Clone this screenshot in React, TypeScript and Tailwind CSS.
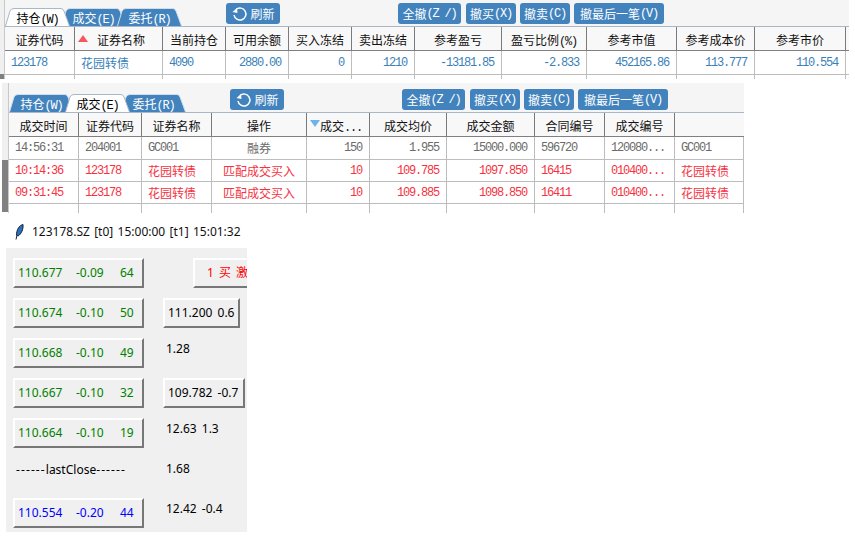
import React from 'react';

const CJK = '"Noto Sans CJK SC", sans-serif';
const MONO = '"Liberation Mono", "Noto Sans CJK SC", monospace';
const TK = '"Noto Sans", "Noto Sans CJK SC", sans-serif';

type Col = { w: number; label: string };

const holdCols: Col[] = [
  { w: 70, label: '证券代码' },
  { w: 88, label: '证券名称' },
  { w: 63, label: '当前持仓' },
  { w: 63, label: '可用余额' },
  { w: 63, label: '买入冻结' },
  { w: 63, label: '卖出冻结' },
  { w: 87, label: '参考盈亏' },
  { w: 85, label: '盈亏比例(%)' },
  { w: 90, label: '参考市值' },
  { w: 78, label: '参考成本价' },
  { w: 91, label: '参考市价' },
];

const holdRow = ['123178', '花园转债', '4090', '2880.00', '0', '1210', '-13181.85', '-2.833', '452165.86', '113.777', '110.554'];
const holdAlign = ['l', 'l', 'l', 'r', 'r', 'r', 'r', 'r', 'r', 'r', 'r'];

const dealCols: Col[] = [
  { w: 70, label: '成交时间' },
  { w: 63, label: '证券代码' },
  { w: 70, label: '证券名称' },
  { w: 95, label: '操作' },
  { w: 63, label: '成交...' },
  { w: 77, label: '成交均价' },
  { w: 88, label: '成交金额' },
  { w: 70, label: '合同编号' },
  { w: 70, label: '成交编号' },
  { w: 69, label: '' },
];

const dealAlign = ['l', 'l', 'l', 'c', 'r', 'r', 'r', 'l', 'l', 'l'];
const dealRows = [
  { color: 'text-[#6b6b6b]', h: 'h-[23px]', cells: ['14:56:31', '204001', 'GC001', '融券', '150', '1.955', '15000.000', '596720', '120080...', 'GC001'] },
  { color: 'text-[#f5333f]', h: 'h-[22px]', cells: ['10:14:36', '123178', '花园转债', '匹配成交买入', '10', '109.785', '1097.850', '16415', '010400...', '花园转债'] },
  { color: 'text-[#f5333f]', h: 'h-[22px]', cells: ['09:31:45', '123178', '花园转债', '匹配成交买入', '10', '109.885', '1098.850', '16411', '010400...', '花园转债'] },
];

// latin runs are narrower than the CJK ones in the original bitmap font
function Mixed({ text }: { text: string }) {
  const parts = text.split(/([\x00-\x7f]+)/).filter(Boolean);
  return (
    <>
      {parts.map((p, i) =>
        /^[\x00-\x7f]+$/.test(p) ? (
          <span key={i} className="whitespace-pre text-[12px] tracking-[-1.2px]" style={{ fontFamily: MONO }}>
            {p}
          </span>
        ) : (
          <span key={i} className="text-[12px]" style={{ fontFamily: CJK }}>
            {p}
          </span>
        ),
      )}
    </>
  );
}

function Tabs({ active }: { active: number }) {
  const labels = ['持仓(W)', '成交(E)', '委托(R)'];
  return (
    <div className="flex h-[18px] items-end">
      {labels.map((label, i) => (
        <div
          key={label}
          className={
            'relative flex h-[18px] w-[65px] shrink-0 items-center justify-center leading-none ' +
            (i > 0 ? '-ml-[9px] ' : '') +
            (i === active ? 'z-10 text-black' : 'text-white')
          }
        >
          <svg width="65" height="18" viewBox="0 0 65 18" className="absolute left-0 top-0">
            <path
              d="M0.500 18L5 3Q6 0.500 9 0.500H56Q58 0.500 59 3L64.500 18"
              fill={i === active ? '#ffffff' : '#4283bd'}
              stroke={i === active ? '#a9b7c6' : '#cfdeeb'}
              strokeWidth="1"
            />
          </svg>
          <span className="relative">
            <Mixed text={label} />
          </span>
        </div>
      ))}
    </div>
  );
}

function Btn({ w, children }: { w: number; children: React.ReactNode }) {
  return (
    <div
      className="flex h-[21px] shrink-0 items-center justify-center rounded-[3px] bg-[#4283bd] leading-none text-white"
      style={{ width: w }}
    >
      {children}
    </div>
  );
}

function Toolbar() {
  return (
    <div className="flex items-start">
      <Btn w={54}>
        <svg width="17" height="17" viewBox="0 0 17 17" fill="none" className="mr-[2px]">
          <path d="M5 4.500A6 6 0 1 1 3 10" stroke="white" strokeWidth="1.500" />
          <path d="M1.500 7L6.500 8L6 3Z" fill="white" />
        </svg>
        <Mixed text="刷新" />
      </Btn>
      <div className="w-[118px] shrink-0" />
      <Btn w={63}><Mixed text="全撤(Z /)" /></Btn>
      <div className="ml-[5px] flex gap-[4px]">
        <Btn w={50}><Mixed text="撤买(X)" /></Btn>
        <Btn w={50}><Mixed text="撤卖(C)" /></Btn>
        <Btn w={90}><Mixed text="撤最后一笔(V)" /></Btn>
      </div>
    </div>
  );
}

function Header({ cols, arrow }: { cols: Col[]; arrow: { index: number; dir: 'up' | 'down' } }) {
  return (
    <div className="flex h-[25px] border-y border-t-[#a9b7c6] border-b-[#808080] bg-[#f8f8f8]">
      {cols.map((c, i) => {
        const hit = arrow.index === i;
        const down = hit && arrow.dir === 'down';
        return (
          <div
            key={i}
            className={
              'relative flex shrink-0 items-center text-[#111] ' +
              (i < cols.length - 1 || cols.length > 10 ? 'border-r border-[#7a7a7a] ' : '') +
              (down ? 'justify-start pl-[13px]' : hit ? 'justify-center pl-[5px]' : 'justify-center')
            }
            style={{ width: c.w }}
          >
            {hit && arrow.dir === 'up' && (
              <span className="absolute left-[3px] top-[8px] h-0 w-0 border-x-[5px] border-b-[7px] border-x-transparent border-b-[#f4585c]" />
            )}
            {down && (
              <span className="absolute left-[3px] top-[7px] h-0 w-0 border-x-[5px] border-t-[7px] border-x-transparent border-t-[#6cb4ee]" />
            )}
            <span className="whitespace-nowrap">
              <Mixed text={c.label} />
            </span>
          </div>
        );
      })}
    </div>
  );
}

function Cell({ w, align, children }: { w: number; align: string; children: React.ReactNode }) {
  const pos = align === 'r' ? 'justify-end pr-[7px]' : align === 'c' ? 'justify-center' : 'justify-start pl-[6px]';
  return (
    <div className={'flex shrink-0 items-center overflow-hidden whitespace-nowrap border-r border-[#bdbdbd] ' + pos} style={{ width: w }}>
      {children}
    </div>
  );
}

function Stub({ cols, h }: { cols: Col[]; h: number }) {
  return (
    <div className="flex bg-white" style={{ height: h }}>
      {cols.map((c, i) => (
        <div key={i} className="shrink-0 border-r border-[#bdbdbd]" style={{ width: c.w }} />
      ))}
    </div>
  );
}

function TkBtn({ w, className, children }: { w: number; className?: string; children: React.ReactNode }) {
  return (
    <div
      className={
        'flex h-[30px] shrink-0 items-center whitespace-pre border-2 border-t-white border-l-white border-r-[#777] border-b-[#777] bg-[#f0f0f0] pl-[3px] text-[12px] ' +
        (className ?? '')
      }
      style={{ width: w }}
    >
      {children}
    </div>
  );
}

function Quote({ price, pct, vol, color }: { price: string; pct: string; vol: string; color: string }) {
  return (
    <TkBtn w={131} className={color}>
      <span className="w-[58px] shrink-0">{price}</span>
      <span className="w-[44px] shrink-0">{pct}</span>
      <span>{vol}</span>
    </TkBtn>
  );
}

function SideText({ children }: { children: React.ReactNode }) {
  return <div className="h-[30px] pl-[3px] text-[12px] leading-[22px] text-black">{children}</div>;
}

const green = 'text-[#008000]';

export default function App() {
  return (
    <div className="h-[548px] w-[855px] overflow-hidden bg-white">
      {/* 持仓 */}
      <div className="flex h-[79px]">
        <div className="flex w-[5px] shrink-0 flex-col border-r border-[#c8c8c8] bg-[#f0f0f0]">
          <div className="flex-1" />
          <div className="h-[5px] bg-[#808080]" />
        </div>
        <div className="w-[844px]">
          <div className="flex h-[26px] items-end bg-[#f5f5f5]">
            <div className="w-[221px] shrink-0"><Tabs active={0} /></div>
            <div className="mb-[2px]"><Toolbar /></div>
          </div>
          <Header cols={holdCols} arrow={{ index: 1, dir: 'up' }} />
          <div className="flex h-[24px] border-b border-[#bdbdbd] bg-white text-[#3a7fb8]">
            {holdCols.map((c, i) => (
              <Cell key={i} w={c.w} align={holdAlign[i]}>
                <Mixed text={holdRow[i]} />
              </Cell>
            ))}
          </div>
          <Stub cols={holdCols} h={4} />
        </div>
      </div>

      {/* 成交 */}
      <div className="mt-[4px] flex h-[130px]">
        <div className="ml-[2px] flex w-[7px] shrink-0 flex-col border-r border-[#c8c8c8]">
          <div className="h-[77px] bg-[#f0f0f0]" />
          <div className="h-[52px] bg-[#808080]" />
        </div>
        <div className="w-[735px]">
          <div className="flex h-[29px] items-end bg-[#f5f5f5]">
            <div className="w-[221px] shrink-0"><Tabs active={1} /></div>
            <div className="mb-[2px]"><Toolbar /></div>
          </div>
          <Header cols={dealCols} arrow={{ index: 4, dir: 'down' }} />
          {dealRows.map((r, ri) => (
            <div key={ri} className={'flex border-b border-[#bdbdbd] bg-white ' + r.h + ' ' + r.color}>
              {dealCols.map((c, i) => (
                <Cell key={i} w={c.w} align={dealAlign[i]}>
                  <Mixed text={r.cells[i]} />
                </Cell>
              ))}
            </div>
          ))}
          <Stub cols={dealCols} h={9} />
        </div>
      </div>

      {/* 行情窗口 */}
      <div className="flex h-[35px] items-center pl-[15px] pt-[3px]" style={{ fontFamily: TK }}>
        <svg width="9" height="16" viewBox="0 0 9 16">
          <path d="M8 0.500C4 1.500 1.500 6 1.500 11L3 12C6.500 10 8.500 5 8 0.500Z" fill="#2f6fb5" stroke="#10243c" strokeWidth="1" />
          <path d="M2 11L1 15.500" stroke="#10243c" strokeWidth="1" />
        </svg>
        <span className="ml-[8px] text-[12px] text-[#111] [word-spacing:1.2px]">123178.SZ [t0] 15:00:00 [t1] 15:01:32</span>
      </div>

      <div className="ml-[6px] flex h-[284px] w-[241px] overflow-hidden bg-[#f0f0f0] pl-[7px] pt-[10px]" style={{ fontFamily: TK }}>
        <div className="flex w-[150px] shrink-0 flex-col gap-[10px]">
          <Quote price="110.677" pct="-0.09" vol="64" color={green} />
          <Quote price="110.674" pct="-0.10" vol="50" color={green} />
          <Quote price="110.668" pct="-0.10" vol="49" color={green} />
          <Quote price="110.667" pct="-0.10" vol="32" color={green} />
          <Quote price="110.664" pct="-0.10" vol="19" color={green} />
          <div className="h-[30px] pl-[3px] text-[12px] leading-[24px] text-black">
            <span className="tracking-[1.1px]">------</span>lastClose<span className="tracking-[1.1px]">------</span>
          </div>
          <Quote price="110.554" pct="-0.20" vol="44" color="text-[#0000ff]" />
        </div>
        <div className="flex flex-col gap-[10px] [word-spacing:2px]">
          <div className="ml-[30px] w-[90px]">
            <TkBtn w={90} className="pl-[12px] text-[#ff0000]">1 买 激活</TkBtn>
          </div>
          <TkBtn w={77} className="pl-[2px] text-black">111.200 0.6</TkBtn>
          <SideText>1.28</SideText>
          <TkBtn w={82} className="pl-[2px] text-black">109.782 -0.7</TkBtn>
          <SideText>12.63 1.3</SideText>
          <SideText>1.68</SideText>
          <SideText>12.42 -0.4</SideText>
        </div>
      </div>
    </div>
  );
}
